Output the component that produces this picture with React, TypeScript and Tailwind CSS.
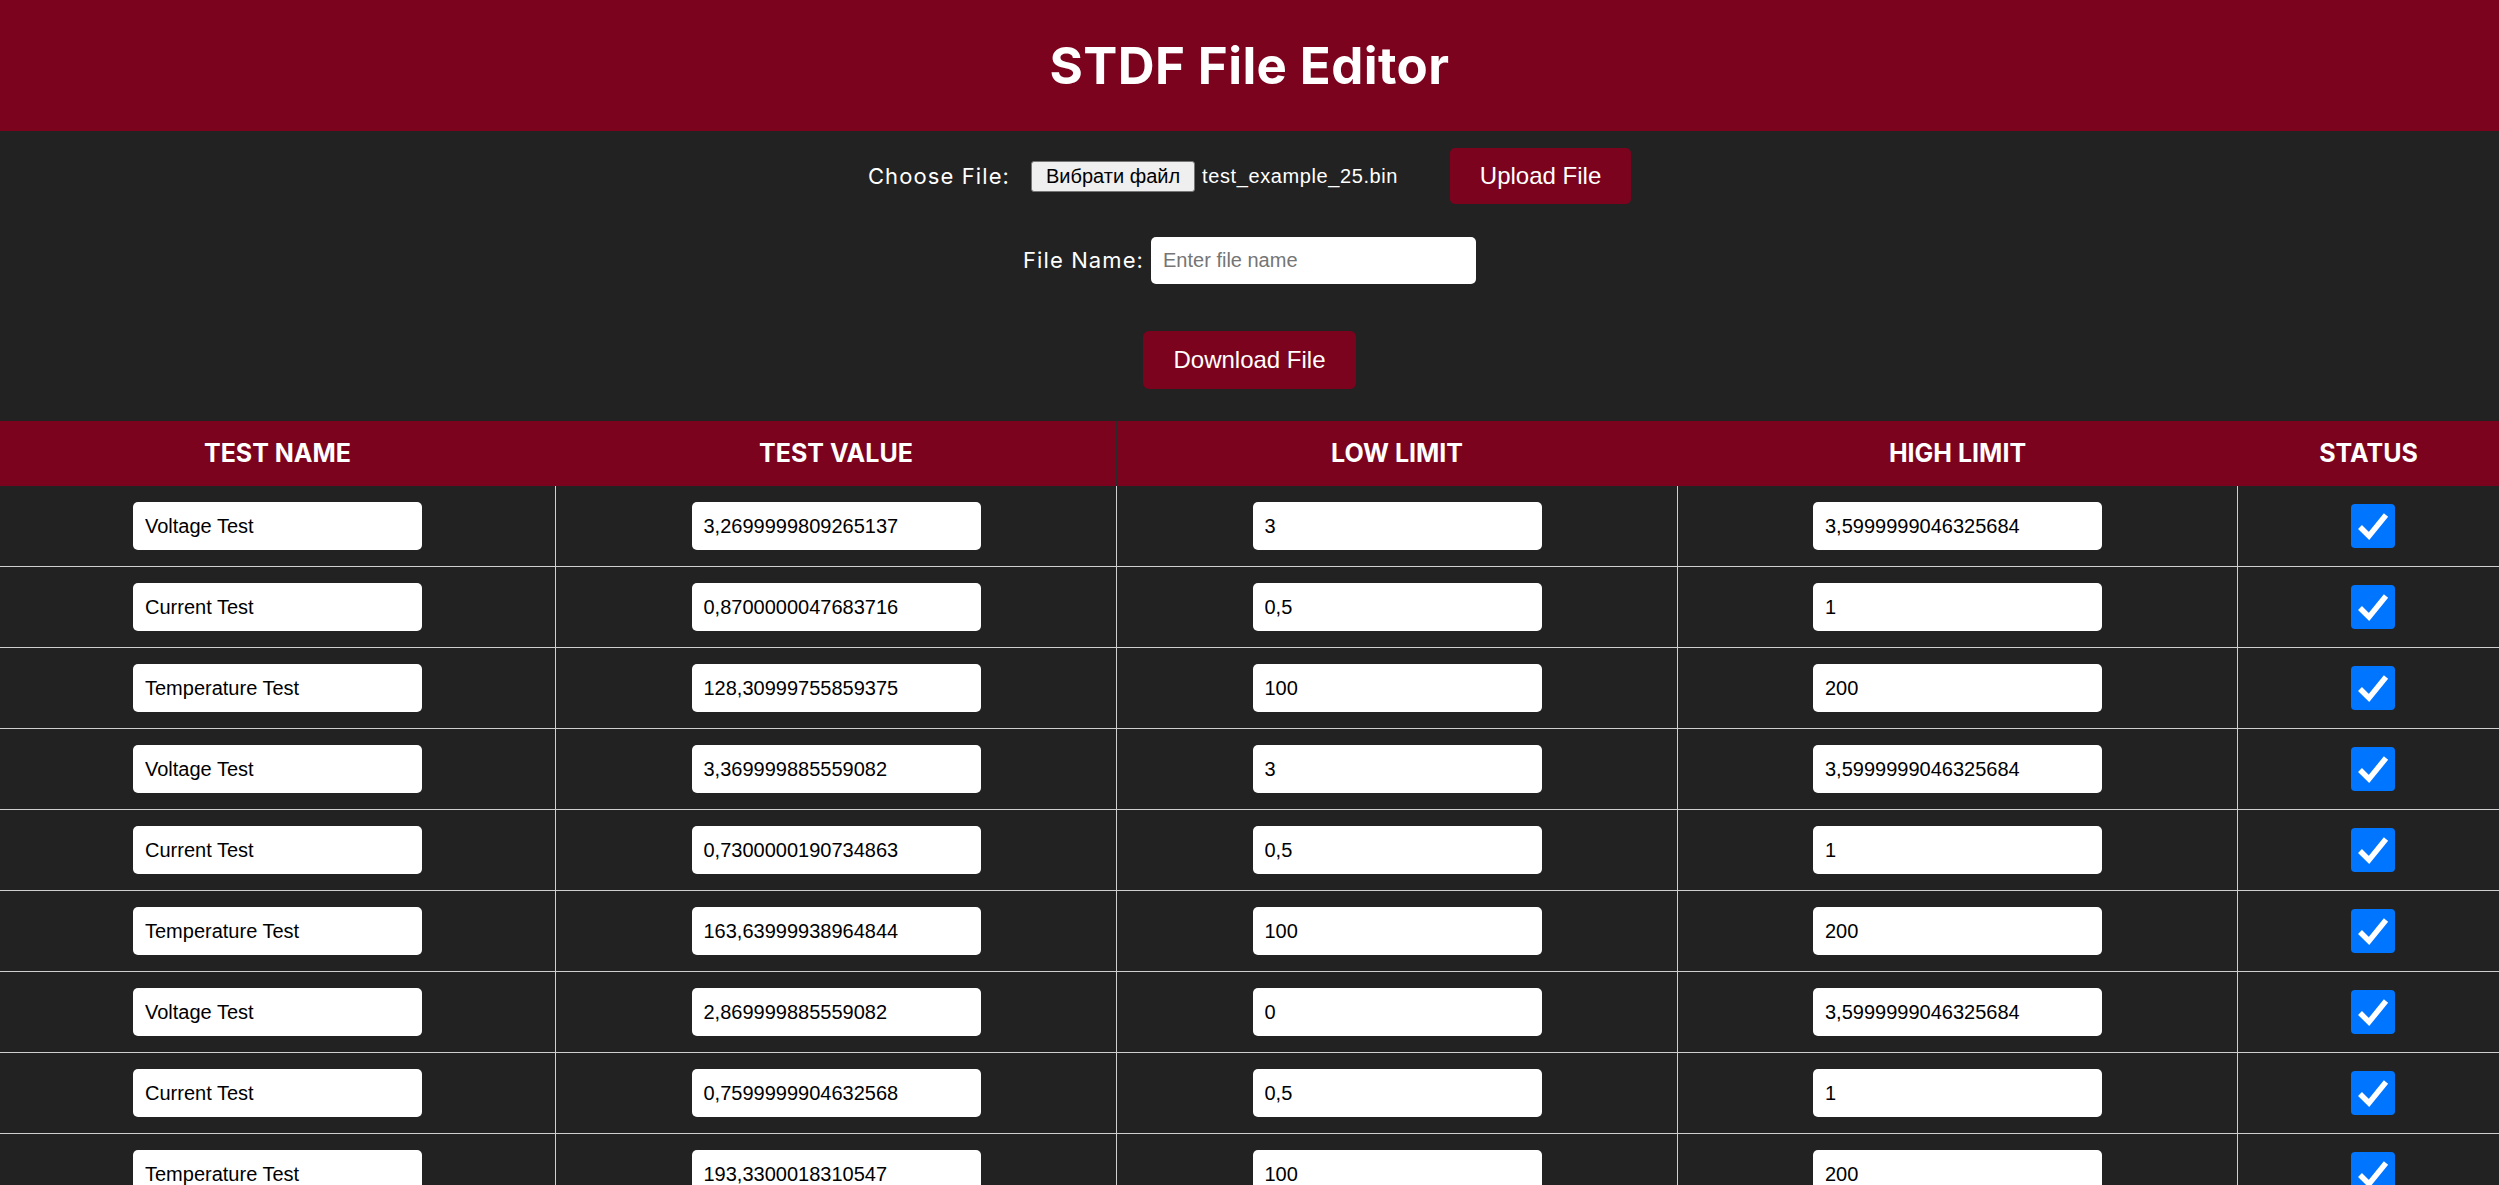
import React from "react";

const rows = [
  ["Voltage Test", "3,2699999809265137", "3", "3,5999999046325684"],
  ["Current Test", "0,8700000047683716", "0,5", "1"],
  ["Temperature Test", "128,30999755859375", "100", "200"],
  ["Voltage Test", "3,369999885559082", "3", "3,5999999046325684"],
  ["Current Test", "0,7300000190734863", "0,5", "1"],
  ["Temperature Test", "163,63999938964844", "100", "200"],
  ["Voltage Test", "2,869999885559082", "0", "3,5999999046325684"],
  ["Current Test", "0,7599999904632568", "0,5", "1"],
  ["Temperature Test", "193,3300018310547", "100", "200"],
];

const mont = "font-['Inter',sans-serif]";
const arial = "font-['Liberation_Sans',Arial,sans-serif]";

function Cell({ value, first }: { value: string; first?: boolean }) {
  return (
    <div
      className={`flex items-center justify-center ${first ? "" : "border-l border-[#cfcfcf]"}`}
    >
      <input
        readOnly
        value={value}
        className={`w-[289px] h-[48px] rounded-[5px] bg-white px-[12px] text-[20px] text-black outline-none ${arial}`}
      />
    </div>
  );
}

function Check() {
  return (
    <div className="w-[44px] h-[44px] rounded-[4px] bg-[#0075ff] flex items-center justify-center">
      <svg width="44" height="44" viewBox="0 0 44 44">
        <polyline
          points="9,23 18,32 35,11"
          fill="none"
          stroke="white"
          strokeWidth="5.5"
          strokeLinecap="butt"
          strokeLinejoin="miter"
        />
      </svg>
    </div>
  );
}

export default function App() {
  const grid = "grid grid-cols-[555px_561px_561px_560px_1fr]";
  return (
    <div className="min-h-screen bg-[#222222] text-white">
      <header className="h-[131px] bg-[#7b031e] flex items-center justify-center">
        <h1 className={`text-[51px] font-bold leading-none tracking-[0.4px] ${mont}`}>STDF File Editor</h1>
      </header>

      <div className="flex flex-col items-center">
        <div className="mt-[17px] h-[56px] flex items-center">
          <span className={`text-[22px] tracking-[1.1px] ${mont}`}>Choose File:</span>
          <span
            className={`ml-[21px] h-[31px] w-[164px] flex items-center justify-center rounded-[3px] border border-[#767676] bg-[#efefef] text-[20px] text-black ${arial}`}
          >
            Вибрати файл
          </span>
          <span className={`ml-[7px] text-[20px] tracking-[0.6px] ${arial}`}>test_example_25.bin</span>
          <button
            className={`ml-[52px] h-[56px] w-[181px] rounded-[5px] bg-[#7b031e] text-[24px] text-white ${arial}`}
          >
            Upload File
          </button>
        </div>

        <div className="mt-[33px] flex items-center">
          <span className={`text-[22px] tracking-[1.1px] ${mont}`}>File Name:</span>
          <input
            placeholder="Enter file name"
            className={`ml-[7px] h-[47px] w-[325px] rounded-[5px] bg-white px-[12px] text-[20px] text-black placeholder:text-[#757575] outline-none ${arial}`}
          />
        </div>

        <button
          className={`mt-[47px] h-[58px] w-[213px] rounded-[6px] bg-[#7b031e] text-[24px] text-white ${arial}`}
        >
          Download File
        </button>
      </div>

      <div className="mt-[32px]">
        <div className={`${grid} h-[65px] bg-[#7b031e]`}>
          {["TEST NAME", "TEST VALUE", "LOW LIMIT", "HIGH LIMIT", "STATUS"].map((h, i) => (
            <div
              key={h}
              className={`flex items-center justify-center text-[25px] font-bold ${mont} ${i ? "border-l border-[#2a2a2a]" : ""}`}
            >
              {h}
            </div>
          ))}
        </div>
        {rows.map((r, idx) => (
          <div key={idx} className={`${grid} h-[81px] border-b border-[#cfcfcf]`}>
            <Cell value={r[0]} first />
            <Cell value={r[1]} />
            <Cell value={r[2]} />
            <Cell value={r[3]} />
            <div className="flex items-center justify-center border-l border-[#cfcfcf] pl-[8px]">
              <Check />
            </div>
          </div>
        ))}
      </div>
    </div>
  );
}
